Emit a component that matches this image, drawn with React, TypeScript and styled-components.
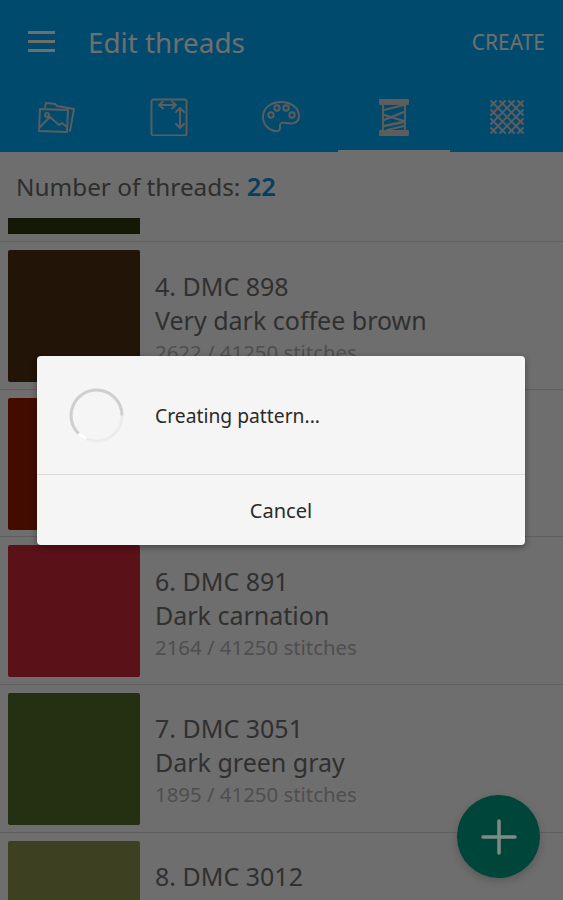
import * as React from 'react';
import styled, { createGlobalStyle } from 'styled-components';

const GlobalStyle = createGlobalStyle`
  html, body {
    margin: 0;
    padding: 0;
    background: #fff;
    font-family: "Noto Sans", "Open Sans", sans-serif;
  }
  * { box-sizing: border-box; }
`;

const Screen = styled.div`
  position: relative;
  width: 563px;
  height: 900px;
  overflow: hidden;
  background: #fff;
`;

const Header = styled.header`
  background: #00acff;
  color: #fff;
  height: 152px;
  display: flex;
  flex-direction: column;
`;

const Toolbar = styled.div`
  height: 88px;
  display: flex;
  align-items: center;
  padding: 0 18px 5px 28px;
`;

const MenuButton = styled.div`
  width: 27px;
  display: flex;
  flex-direction: column;
  gap: 6px;
  margin-right: 33px;
  span {
    display: block;
    height: 3px;
    background: #fff;
  }
`;

const Title = styled.h1`
  flex: 1;
  margin: 0;
  font-size: 27.8px;
  font-weight: 400;
`;

const Action = styled.div`
  font-size: 21px;
`;

const Tabs = styled.div`
  flex: 1;
  display: grid;
  grid-template-columns: repeat(5, 1fr);
`;

const Tab = styled.div<{ $active?: boolean }>`
  display: flex;
  align-items: flex-start;
  justify-content: center;
  padding-top: 10px;
  border-bottom: 2px solid ${p => (p.$active ? '#fff' : 'transparent')};
  svg {
    display: block;
    width: 38px;
    height: 38px;
    fill: none;
    stroke: #d8d8d8;
    stroke-width: 1.9;
    stroke-linejoin: round;
    stroke-linecap: round;
  }
`;

const Summary = styled.div`
  height: 66px;
  padding: 19px 16px 0;
  font-size: 24.3px;
  line-height: 30px;
  color: #6c6c6c;
  b {
    font-size: 25.5px;
    font-weight: 600;
    color: #0f8fd8;
  }
`;

const StubRow = styled.div`
  height: 24px;
  padding-left: 8px;
  border-bottom: 1px solid #ddd;
`;

const StubSwatch = styled.div<{ $color: string }>`
  width: 132px;
  height: 16px;
  background: ${p => p.$color};
`;

const Row = styled.div`
  height: 147.67px;
  display: flex;
  padding: 8px 0 0 8px;
  border-bottom: 1px solid #ddd;
`;

const Swatch = styled.div<{ $color: string }>`
  width: 132px;
  height: 132px;
  background: ${p => p.$color};
  border-radius: 2px;
`;

const RowText = styled.div`
  margin-left: 15px;
  padding-top: 18.5px;
`;

const RowName = styled.div`
  font-size: 25px;
  line-height: 34px;
  color: #707070;
`;

const RowStitches = styled.div`
  font-size: 20.4px;
  line-height: 30px;
  color: #b5b5b5;
`;

const Scrim = styled.div`
  position: absolute;
  inset: 0;
  background: rgba(0, 0, 0, 0.57);
`;

const Fab = styled.div`
  position: absolute;
  left: 457px;
  top: 795px;
  width: 83px;
  height: 83px;
  border-radius: 50%;
  background: #004539;
  box-shadow: 0 3px 8px rgba(0, 0, 0, 0.2);
  display: flex;
  align-items: center;
  justify-content: center;
  svg {
    width: 36px;
    height: 36px;
    stroke: #808a88;
    stroke-width: 3.5;
    stroke-linecap: round;
  }
`;

const Dialog = styled.div`
  position: absolute;
  left: 37px;
  top: 356px;
  width: 488px;
  height: 189px;
  background: #f5f5f5;
  border-radius: 4px;
  box-shadow: 0 2px 6px rgba(0, 0, 0, 0.4);
  display: flex;
  flex-direction: column;
`;

const DialogBody = styled.div`
  height: 119px;
  display: flex;
  align-items: center;
  padding-left: 32px;
  gap: 31px;
  border-bottom: 1px solid #dcdcdc;
  font-size: 19.3px;
  color: #2a2a2a;
`;

const Spinner = styled.svg`
  width: 55px;
  height: 55px;
  flex: none;
  fill: none;
  stroke-width: 3;
`;

const DialogButton = styled.div`
  flex: 1;
  display: flex;
  align-items: center;
  justify-content: center;
  font-size: 20px;
  color: #2a2a2a;
`;

type Thread = { name?: string; label?: string; count?: number; color: string };

// only what the dialog and the bottom edge leave visible gets text
const threads: Thread[] = [
  { name: '4. DMC 898', label: 'Very dark coffee brown', count: 2622, color: '#4f3010' },
  { color: '#9c1c00' },
  { name: '6. DMC 891', label: 'Dark carnation', count: 2164, color: '#d02838' },
  { name: '7. DMC 3051', label: 'Dark green gray', count: 1895, color: '#56702a' },
  { name: '8. DMC 3012', color: '#8e9650' },
];

const App = () => (
  <Screen>
    <GlobalStyle />
    <Header>
      <Toolbar>
        <MenuButton><span /><span /><span /></MenuButton>
        <Title>Edit threads</Title>
        <Action>CREATE</Action>
      </Toolbar>
      <Tabs>
        <Tab>
          <svg viewBox="0 0 38 38">
            <path d="M8 9l1-4 9 1 2 2 17 3-4 22" />
            <path d="M3 11l28 1-1 22-28-1z" />
            <circle cx="10" cy="17" r="2" />
            <path d="M3 29l10-10 9 8 3-2 5 4" />
          </svg>
        </Tab>
        <Tab>
          <svg viewBox="0 0 38 38">
            <rect x="1.5" y="1.5" width="35" height="36" rx="2" />
            <path d="M9 7h17M13 3.5L9 7l4 3.500M22 3.500L26 7l-4 3.500" />
            <path d="M30 10v20M26 26l4 4 4-4M26 14l4-4 4 4" />
          </svg>
        </Tab>
        <Tab>
          <svg viewBox="0 0 38 38">
            <path d="M19 4C9 4 1 10 1 19s8 15 15 14c3-1 2-4 2-6s3-3 6-2c5 1 13 1 13-7C37 10 29 4 19 4z" />
            <circle cx="9" cy="17" r="2.700" />
            <circle cx="15" cy="10" r="2.700" />
            <circle cx="24" cy="10" r="2.700" />
            <circle cx="30" cy="17" r="2.700" />
          </svg>
        </Tab>
        <Tab $active>
          <svg viewBox="0 0 38 38">
            <path d="M5 2h28v4H5zM5 33h28v4H5z" fill="#d8d8d8" />
            <path d="M8 6v27M30 6v27" />
            <path d="M9 12l20-5M9 17l20 6M9 22l20-8M9 28l20-4M12 32l17-4" strokeWidth="2.300" />
          </svg>
        </Tab>
        <Tab>
          <svg viewBox="0 0 38 38" strokeWidth="2.100">
            <path d="M3 8l5-5M3 17L17 3M3 26L26 3M3 35L35 3M12 35L35 12M21 35l14-14M30 35l5-5" />
            <path d="M35 8l-5-5M35 17L21 3M35 26L12 3M35 35L3 3M26 35L3 12M17 35L3 21M8 35l-5-5" />
          </svg>
        </Tab>
      </Tabs>
    </Header>
    <Summary>Number of threads: <b>22</b></Summary>
    <StubRow><StubSwatch $color="#2e3a0c" /></StubRow>
    {threads.map(t => (
      <Row key={t.color}>
        <Swatch $color={t.color} />
        {t.name && (
          <RowText>
            <RowName>{t.name}</RowName>
            {t.label && <RowName>{t.label}</RowName>}
            {t.count && <RowStitches>{t.count} / 41250 stitches</RowStitches>}
          </RowText>
        )}
      </Row>
    ))}
    <Scrim />
    <Fab>
      <svg viewBox="0 0 36 36"><path d="M18 2v32M2 18h32" /></svg>
    </Fab>
    <Dialog>
      <DialogBody>
        <Spinner viewBox="0 0 55 55">
          <circle cx="27.500" cy="27.500" r="25.500" stroke="#ececec" />
          <path d="M10 46A25.500 25.500 0 0 1 27.500 2A25.500 25.500 0 0 1 53 27.500" stroke="#cfcfcf" />
          <path d="M10.500 46.500L16 50" stroke="#fff" strokeLinecap="round" />
        </Spinner>
        Creating pattern...
      </DialogBody>
      <DialogButton>Cancel</DialogButton>
    </Dialog>
  </Screen>
);

export default App;
